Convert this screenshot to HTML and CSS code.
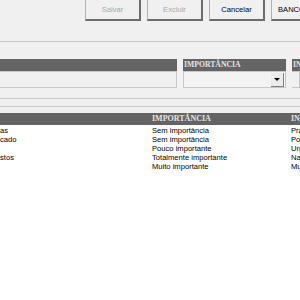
FILE: index.html
```html
<!DOCTYPE html>
<html lang="pt-BR">
<head>
    <meta charset="UTF-8">
    <title>Cadastro</title>
    <link rel="stylesheet" href="styles.css">
</head>
<body>
    <div class="toolbar">
        <button class="btn" disabled>Salvar</button>
        <button class="btn" disabled>Excluir</button>
        <button class="btn">Cancelar</button>
        <button class="btn btn-wide">BANCO DE DADOS</button>
    </div>

    <div class="panel">
        <div class="filters">
            <div class="field field-name">
                <div class="field-head"></div>
                <div class="field-input"></div>
            </div>
            <div class="field field-imp">
                <div class="field-head">IMPORTÂNCIA</div>
                <div class="field-input combo">
                    <span class="combo-btn"><span class="arrow"></span></span>
                </div>
            </div>
            <div class="field field-rest">
                <div class="field-head">INFLUÊNCIA</div>
                <div class="field-input"></div>
            </div>
        </div>
    </div>

    <div class="grid">
        <div class="grid-head">
            <span class="col col-1"></span>
            <span class="col col-2">IMPORTÂNCIA</span>
            <span class="col col-3">INFLUÊNCIA</span>
        </div>
        <div class="grid-body">
            <div class="row"><span class="col col-1">as</span><span class="col col-2">Sem importância</span><span class="col col-3">Prazo</span></div>
            <div class="row"><span class="col col-1">cado</span><span class="col col-2">Sem importância</span><span class="col col-3">Pouca</span></div>
            <div class="row"><span class="col col-1"></span><span class="col col-2">Pouco importante</span><span class="col col-3">Urgente</span></div>
            <div class="row"><span class="col col-1">stos</span><span class="col col-2">Totalmente importante</span><span class="col col-3">Nada</span></div>
            <div class="row"><span class="col col-1"></span><span class="col col-2">Muito importante</span><span class="col col-3">Muita</span></div>
        </div>
    </div>
</body>
</html>
```

FILE: styles.css
```css
html, body {
    height: 100%;
}
body {
    margin: 0;
    background: #f0f0f0;
    font-family: "Liberation Sans", Arial, sans-serif;
    font-size: 7.6px;
    color: #000;
    overflow: hidden;
    display: flex;
    flex-direction: column;
}
.toolbar {
    display: flex;
    gap: 6px;
    padding-left: 85px;
    height: 21px;
    padding-bottom: 20px;
    border-bottom: 1px solid #c8c8c8;
    white-space: nowrap;
}
.btn {
    flex: none;
    width: 56px;
    height: 21px;
    padding: 0;
    margin: 0;
    background: #f0f0f0;
    border: none;
    border-left: 1px solid #b0b0b0;
    border-right: 2px solid #6c6c6c;
    border-bottom: 2px solid #6c6c6c;
    font-family: inherit;
    font-size: 7.6px;
    color: #000;
}
.btn:disabled {
    color: #a8a8a8;
}
.btn-wide {
    width: 80px;
    text-align: left;
    padding-left: 6px;
}
.panel {
    padding-top: 17px;
    padding-bottom: 10px;
    border-bottom: 1px solid #c8c8c8;
}
.filters {
    display: flex;
    gap: 6px;
}
.field-name {
    flex: none;
    width: 177px;
}
.field-imp {
    flex: none;
    width: 103px;
}
.field-rest {
    flex: 1;
    min-width: 0;
}
.field-head {
    height: 12px;
    background: #646464;
    color: #e4e4e4;
    font-family: "Liberation Serif", "Times New Roman", serif;
    font-weight: bold;
    font-size: 7.7px;
    line-height: 12px;
    padding-left: 1px;
    white-space: nowrap;
    overflow: hidden;
}
.field-input {
    height: 15px;
    border-top: 1px solid #c8c8c8;
    border-right: 1px solid #c8c8c8;
    border-bottom: 1px solid #c8c8c8;
    background: #f0f0f0;
}
.combo {
    display: flex;
    justify-content: flex-end;
    align-items: center;
    border-left: 1px solid #c8c8c8;
    background: #f3f3f3;
}
.combo-btn {
    width: 12px;
    height: 13px;
    margin-right: 1px;
    background: #ececec;
    border-right: 1px solid #808080;
    border-bottom: 1px solid #808080;
    display: flex;
    justify-content: center;
    align-items: center;
}
.arrow {
    width: 0;
    height: 0;
    border-left: 3px solid transparent;
    border-right: 3px solid transparent;
    border-top: 3px solid #000;
}
.grid {
    flex: 1;
    margin-top: 7px;
    border-top: 1px solid #c8c8c8;
    padding-top: 6px;
    display: flex;
    flex-direction: column;
}
.grid-head {
    height: 12px;
    background: #646464;
    color: #e4e4e4;
    font-family: "Liberation Serif", "Times New Roman", serif;
    font-weight: bold;
    font-size: 8px;
    line-height: 12px;
    display: flex;
    white-space: nowrap;
}
.grid-body {
    flex: 1;
    background: #fff;
    padding-top: 1px;
}
.row {
    display: flex;
    height: 9px;
    line-height: 9px;
    white-space: nowrap;
}
.col {
    overflow: hidden;
}
.col-1 {
    width: 152px;
    flex: none;
}
.col-2 {
    width: 139px;
    flex: none;
}
.col-3 {
    flex: 1;
    min-width: 0;
}
```
